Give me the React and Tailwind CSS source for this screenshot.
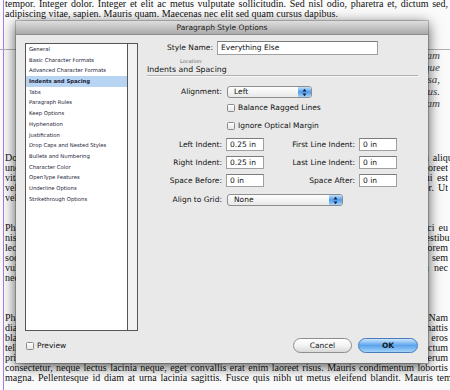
import React from 'react'
import clsx from 'clsx'

const ui = "font-['DejaVu_Sans',sans-serif]"

const sections = [
  'General',
  'Basic Character Formats',
  'Advanced Character Formats',
  'Indents and Spacing',
  'Tabs',
  'Paragraph Rules',
  'Keep Options',
  'Hyphenation',
  'Justification',
  'Drop Caps and Nested Styles',
  'Bullets and Numbering',
  'Character Color',
  'OpenType Features',
  'Underline Options',
  'Strikethrough Options'
]

// one line of the page behind the dialog
const Line = ({ children, last, wide }) => (
  <div
    className={clsx(
      'h-[10px] leading-[10px] overflow-hidden',
      wide ? 'w-[460px]' : 'w-[443px]',
      last ? 'text-left' : 'text-justify [text-align-last:justify]'
    )}
  >
    {children}
  </div>
)

const ItalicLine = ({ children }) => (
  <div className="w-[417px] h-[12px] leading-[12px] overflow-hidden text-justify [text-align-last:justify]">
    {children}
  </div>
)

const Checkbox = ({ label }) => (
  <div className="flex items-center gap-[3px]">
    <span className="w-[8px] h-[8px] rounded-[1.5px] border border-[#8a8a8a] bg-linear-to-b from-white to-[#e6e6e6]" />
    {label && <span className="leading-[10px]">{label}</span>}
  </div>
)

const Field = ({ value, width }) => (
  <div
    className={clsx(
      'h-[13px] border border-[#a0a0a0] border-t-[#7c7c7c] bg-white pl-[3px] flex items-center',
      width
    )}
  >
    {value}
  </div>
)

const Stepper = () => (
  <span className="w-[13px] h-full rounded-r-[2px] bg-linear-to-b from-[#c1e0fc] via-[#4e9bea] to-[#a6d3f8] flex items-center justify-center">
    <svg width="5" height="9" viewBox="0 0 5 9">
      <polygon points="0.5,3.6 2.5,0.8 4.5,3.6" fill="#14233a" />
      <polygon points="0.5,5.4 2.5,8.2 4.5,5.4" fill="#14233a" />
    </svg>
  </span>
)

const Select = ({ value, width }) => (
  <div
    className={clsx(
      'h-[12px] flex items-stretch rounded-[3px] border border-[#8e8e8e] bg-linear-to-b from-white to-[#e8e8e8] overflow-hidden',
      width
    )}
  >
    <span className="flex-1 pl-[6px] flex items-center">{value}</span>
    <Stepper />
  </div>
)

const Row = ({ children, className }) => (
  <div className={clsx('flex items-center', className)}>{children}</div>
)

const Label = ({ children, width }) => (
  <span className={clsx('text-right shrink-0', width)}>{children}</span>
)

export default function App() {
  return (
    <div className="relative w-[450px] h-[390px] overflow-hidden bg-[#fbfbfb]">
      {/* page behind the sheet */}
      <div className="absolute left-[3px] top-0 bottom-0 w-px bg-[#a77bf0]" />
      <div className="absolute left-0 right-0 top-[49px] h-px bg-[#b0b0b0]" />
      <div className="pl-[5px] font-['Liberation_Serif',serif] text-[10px] text-[#111]">
        <div className="-mt-[1px]">
          <Line>
            tempor. Integer dolor. Integer et elit ac metus vulputate sollicitudin. Sed nisl odio, pharetra et, dictum sed,
          </Line>
          <Line last>adipiscing vitae, sapien. Mauris quam. Maecenas nec elit sed quam cursus dapibus.</Line>
        </div>

        <div className="mt-[30px] pl-[18px] italic text-[11px] text-[#444]">
          <ItalicLine>Maecenas nec elit sed quam cursus dapibus; sed in nisl pharetra, dictum at lectus veram</ItalicLine>
          <ItalicLine>Nulla facilisi. Curabitur eu turpis ac tellus commodo malesuada, ut semper dictum atque</ItalicLine>
          <ItalicLine>Praesent vitae arcu tempor, faucibus purus sed, molestie augue. Integer tincidunt massa,</ItalicLine>
          <ItalicLine>Donec vehicula lorem in velit luctus, nec commodo risus tristique. Aliquam porta metus.</ItalicLine>
          <ItalicLine>Suspendisse potenti. In hac habitasse platea dictumst. Morbi elit nec tempus quam</ItalicLine>
        </div>

        <div className="mt-[44px]">
          <Line wide>
            Donec ut est in lectus consequat. Etiam eget dui. Aliquam erat volutpat. Sed at lorem in nunc porta aliquam
          </Line>
          <Line>
            unde sit amet, consectetuer adipiscing elit. Proin vel ante a orci tempus eleifend. Ut magna nunc laoreet
          </Line>
          <Line>
            vitae ante. Nullam dictum felis eu pede mollis pretium. Integer tincidunt. Cras dapibus. Vivamus qui est
          </Line>
          <Line>
            vel augue. Curabitur ullamcorper ultricies nisi. Nam eget dui. Etiam rhoncus. Maecenas tempus dolor. Ut
          </Line>
          <Line last>vel velit sit amet eros vulputate tempus.</Line>
        </div>

        <div className="mt-[20px]">
          <Line>
            Phasellus viverra nulla ut metus varius laoreet. Quisque rutrum. Aenean imperdiet. Etiam ultricies orci eu
          </Line>
          <Line wide>
            nisi vel augue. Curabitur ullamcorper ultricies nisi. Nam eget dui. Etiam rhoncus. Maecenas vestibulum
          </Line>
          <Line>
            lectus. Sed fringilla mauris sit amet nibh. Donec sodales sagittis magna. Sed consequat, leo eget Lorem
          </Line>
          <Line>
            sociis natoque penatibus et magnis dis parturient montes, nascetur ridiculus mus. Donec quam felis, sem
          </Line>
          <Line>
            vulputate eleifend tellus. Aenean leo ligula, porttitor eu, consequat vitae, eleifend ac, enim. Nam nec
          </Line>
          <Line last>nec pellentesque eu, pretium quis, sem.</Line>
        </div>

        <div className="mt-[30px]">
          <Line>
            Phasellus nec sem in justo pellentesque facilisis. Etiam imperdiet imperdiet orci. Pellentesque nunc. Nam
          </Line>
          <Line>
            diam. Vestibulum purus quam, scelerisque ut, mollis sed, nonummy id, metus. Nullam accumsan lorem mattis
          </Line>
          <Line>
            blandit. Sed cursus turpis vitae tortor. Donec posuere vulputate arcu. Phasellus accumsan cursus eros
          </Line>
          <Line>
            tellus. Quisque id mi. Ut tincidunt tincidunt erat. Etiam feugiat lorem non metus. Vestibulum dictum
          </Line>
          <Line>
            primis in faucibus orci luctus et ultrices posuere cubilia Curae; Fusce id purus. Ut varius rerum
          </Line>
          <Line>
            consectetur, neque lectus lacinia neque, eget convallis erat enim laoreet risus. Mauris condimentum lobortis
          </Line>
          <Line wide>
            magna. Pellentesque id diam at urna lacinia sagittis. Fusce quis nibh ut metus eleifend blandit. Mauris tempor
          </Line>
        </div>
      </div>

      {/* the sheet */}
      <div
        className={clsx(
          'absolute left-[16px] top-[21px] w-[412px] h-[342px] flex flex-col bg-[#e9e9e9] shadow-[0_0_0_1px_rgba(0,0,0,0.2),0_3px_13px_rgba(0,0,0,0.7)] text-[7.5px] text-[#111]',
          ui
        )}
      >
        <div className="h-[14px] shrink-0 flex items-center justify-center bg-linear-to-b from-[#dedede] to-[#aaaaaa] border-b border-[#8c8c8c] text-[#1a1a1a]">
          Paragraph Style Options
        </div>

        <div className="flex-1 flex flex-col pt-[8px] pl-[9px] pr-[10px] pb-[10px]">
          <div className="flex">
            <div className="w-[113px] h-[288px] shrink-0 border border-[#555] bg-white flex">
              <div className="flex-1 text-[5.3px] text-[#1b2236]">
                {sections.map(s => (
                  <div
                    key={s}
                    className={clsx(
                      'h-[10.7px] leading-[10.7px] pl-[3px] whitespace-nowrap',
                      s === 'Indents and Spacing' && 'bg-[#b7d4f3] font-bold'
                    )}
                  >
                    {s}
                  </div>
                ))}
              </div>
              <div className="w-[10px] border-l border-[#555] bg-[#f2f2f2]" />
            </div>

            <div className="ml-[8px] flex-1 flex flex-col">
              <Row className="-mt-[2px] h-[14px]">
                <Label width="w-[67px]">Style Name:</Label>
                <div className="ml-[4px] w-[161px] h-[14px] border border-[#a0a0a0] border-t-[#7c7c7c] bg-white pl-[3px] flex items-center">
                  Everything Else
                </div>
              </Row>
              <div className="mt-[3px] h-[6px] leading-[6px] text-[5px] text-[#6a6a6a] pl-[34px]">Location:</div>
              <div className="mt-[1px] h-[10px] leading-[10px] pl-[1px] text-[7.8px]">Indents and Spacing</div>
              <div className="ml-[1px] h-px bg-[#b2b2b2]" />
              <div className="ml-[1px] h-px bg-[#f6f6f6]" />

              <Row className="mt-[9px] h-[12px]">
                <Label width="w-[76px]">Alignment:</Label>
                <div className="ml-[5px]">
                  <Select value="Left" width="w-[85px]" />
                </div>
              </Row>
              <Row className="mt-[5px] h-[10px] pl-[81px]">
                <Checkbox label="Balance Ragged Lines" />
              </Row>
              <Row className="mt-[8px] h-[10px] pl-[81px]">
                <Checkbox label="Ignore Optical Margin" />
              </Row>

              <Row className="mt-[7px] h-[13px]">
                <Label width="w-[76px]">Left Indent:</Label>
                <div className="ml-[4px]">
                  <Field value="0.25 in" width="w-[38px]" />
                </div>
                <Label width="w-[91px]">First Line Indent:</Label>
                <div className="ml-[4px]">
                  <Field value="0 in" width="w-[38px]" />
                </div>
              </Row>
              <Row className="mt-[5px] h-[13px]">
                <Label width="w-[76px]">Right Indent:</Label>
                <div className="ml-[4px]">
                  <Field value="0.25 in" width="w-[38px]" />
                </div>
                <Label width="w-[91px]">Last Line Indent:</Label>
                <div className="ml-[4px]">
                  <Field value="0 in" width="w-[38px]" />
                </div>
              </Row>
              <Row className="mt-[5px] h-[13px]">
                <Label width="w-[76px]">Space Before:</Label>
                <div className="ml-[4px]">
                  <Field value="0 in" width="w-[38px]" />
                </div>
                <Label width="w-[91px]">Space After:</Label>
                <div className="ml-[4px]">
                  <Field value="0 in" width="w-[38px]" />
                </div>
              </Row>
              <Row className="mt-[7px] h-[12px]">
                <Label width="w-[76px]">Align to Grid:</Label>
                <div className="ml-[5px]">
                  <Select value="None" width="w-[116px]" />
                </div>
              </Row>
            </div>
          </div>

          <div className="mt-[7px] h-[15px] flex items-center">
            <div className="ml-[1px]">
              <Checkbox label="Preview" />
            </div>
            <div className="ml-auto flex gap-[6px]">
              <button className="w-[59px] h-[15px] rounded-full border border-[#8d8d8d] bg-linear-to-b from-white via-[#f3f3f3] to-[#d9d9d9] text-[#1a1a1a]">
                Cancel
              </button>
              <button className="w-[60px] h-[15px] rounded-full border border-[#4a7cba] bg-linear-to-b from-[#cbe5fc] via-[#5aa4ec] to-[#a3d2f8] font-bold text-[#101820]">
                OK
              </button>
            </div>
          </div>
        </div>
      </div>
    </div>
  )
}
